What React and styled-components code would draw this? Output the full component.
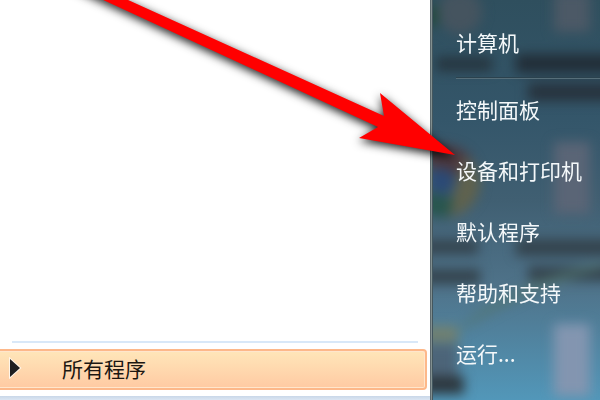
import React from 'react';
import styled, {createGlobalStyle} from 'styled-components';

const GlobalStyle = createGlobalStyle`
  body{
    margin: 0;
    overflow: hidden;
    background: #fff;
    font-family: "Noto Sans CJK SC", sans-serif;
  }
`;

const StartMenu = styled.div`
  position: relative;
  display: flex;
  min-height: 100vh;
  overflow: hidden;
`;

const Programs = styled.section`
  flex: 43;
  display: flex;
  flex-direction: column;
  justify-content: flex-end;
  background: #fff;
`;

const Divider = styled.hr`
  width: auto;
  height: 2px;
  margin: 0 12px 6px;
  border: 0;
  background: #d9e8f8;
`;

const AllPrograms = styled.button`
  display: flex;
  align-items: center;
  gap: 40px;
  height: 41px;
  margin: 0 3px 6px 0;
  padding: 0 0 4px 6px;
  border: 2px solid #fdb88a;
  border-left: 0;
  border-radius: 0 4px 4px 0;
  background: linear-gradient(#ffe6b9, #ffcaa3) padding-box;
  box-shadow: inset -1px 1px 0 #ffe6cc, inset 0 -1px 0 #ffe6cc;
  color: #1c1712;
  font-family: inherit;
  font-size: 21px;
  line-height: 32px;
`;

const SearchEdge = styled.div`
  height: 4px;
  background: linear-gradient(#c9d7e8, #dce6f3);
`;

const Places = styled.nav`
  position: relative;
  flex: 17;
  overflow: hidden;
  box-shadow: inset 1px 0 0 #5b686d, inset 2px 0 0 #829090, inset 3px 0 0 #43565e;
`;

const Backdrop = styled.svg`
  position: absolute;
  inset: 0;
  z-index: -1;
  width: 100%;
  height: 100%;
`;

const PlaceList = styled.ul`
  margin: 0;
  padding: 13px 0 0 26px;
  list-style: none;
`;

const Place = styled.li`
  ${({$divided}) => $divided && `
    &::after{
      content: "";
      display: block;
      height: 1px;
      margin: 3px 0 1px;
      border-top: 1px solid #2b424e;
      background: #566e79;
    }
  `}
`;

const PlaceLink = styled.a`
  display: flex;
  align-items: center;
  box-sizing: border-box;
  height: 61px;
  padding-bottom: 4px;
  color: #f4f8fa;
  font-size: 21px;
  line-height: 32px;
  text-decoration: none;
  white-space: nowrap;
`;

const Pointer = styled.svg`
  position: absolute;
  top: 0;
  left: 0;
  width: 100%;
  height: 100%;
  pointer-events: none;
`;

const places = [
    {name: "计算机", divided: true},
    {name: "控制面板"},
    {name: "设备和打印机"},
    {name: "默认程序"},
    {name: "帮助和支持"},
    {name: "运行..."},
];

function Desktop(){
    return <Backdrop viewBox="0 0 170 400" preserveAspectRatio="none" aria-hidden="true">
        <defs>
            <linearGradient id="glass" x2="0" y2="1">
                <stop offset="0" stopColor="#2f4f5e" />
                <stop offset=".3" stopColor="#34566a" />
                <stop offset=".5" stopColor="#405f72" />
                <stop offset=".72" stopColor="#4f738a" />
                <stop offset="1" stopColor="#5297b9" />
            </linearGradient>
            <filter id="soft" x="-50%" y="-50%" width="200%" height="200%" colorInterpolationFilters="sRGB">
                <feGaussianBlur stdDeviation="6" />
            </filter>
        </defs>
        <rect width="170" height="400" fill="url(#glass)" />
        <g filter="url(#soft)">
            <circle cx="30" cy="12" r="22" fill="#45545f" />
            <rect x="-6" y="6" width="14" height="20" fill="#21493d" />
            <rect x="124" y="-8" width="36" height="40" fill="#4c5966" />
            <rect x="6" y="57" width="56" height="14" fill="#26353f" />
            <rect x="86" y="54" width="100" height="19" fill="#222e38" />
            <rect x="98" y="83" width="90" height="18" fill="#27333e" />
            <g opacity=".85">
                <path d="M-8 146Q34 140 44 164L20 180L-8 160Z" fill="#503337" />
                <path d="M34 158Q56 170 48 194Q38 216 18 216L24 190Z" fill="#656348" />
                <path d="M-8 192L24 198L18 218L-8 214Z" fill="#245447" />
                <circle cx="12" cy="181" r="13" fill="#284777" />
            </g>
            <rect x="124" y="142" width="36" height="72" fill="#5a6576" />
            <rect x="-8" y="240" width="56" height="14" fill="#34434d" />
            <rect x="86" y="239" width="100" height="17" fill="#34434d" />
            <rect x="-8" y="269" width="58" height="15" fill="#34434d" />
            <rect x="98" y="266" width="90" height="15" fill="#34434d" />
            <path d="M24 334Q60 294 140 270L174 262V268Q100 290 52 318Z" fill="#53756d" opacity=".7" />
            <rect x="-8" y="326" width="36" height="16" fill="#71806f" />
            <rect x="-8" y="344" width="36" height="36" fill="#4c6478" />
            <rect x="124" y="324" width="36" height="72" fill="#8395b0" />
            <rect x="-8" y="376" width="42" height="18" fill="#2d373e" />
        </g>
    </Backdrop>
}

function App(){
    return <StartMenu>
        <GlobalStyle />
        <Programs>
            <Divider />
            <AllPrograms type="button">
                <svg width="16" height="22" viewBox="0 0 16 22" aria-hidden="true">
                    <path d="M4 2L14 11L4 20Z" fill="#1e1e20" stroke="#fff6ea" strokeWidth="2" paintOrder="stroke" />
                </svg>
                所有程序
            </AllPrograms>
            <SearchEdge />
        </Programs>
        <Places>
            <Desktop />
            <PlaceList>
                {places.map(({name, divided}) => <Place key={name} $divided={divided}>
                    <PlaceLink href="#">{name}</PlaceLink>
                </Place>)}
            </PlaceList>
        </Places>
        <Pointer viewBox="0 0 600 400" aria-hidden="true">
            <defs>
                <filter id="shadow" x="-10%" y="-20%" width="120%" height="150%" colorInterpolationFilters="sRGB">
                    <feDropShadow dx="0" dy="3" stdDeviation="5" floodColor="#000" floodOpacity=".9" />
                </filter>
            </defs>
            <path d="M84 -20L384 116L380 93L455 155L359 138L378 127L60 -20Z" fill="#f00" filter="url(#shadow)" />
        </Pointer>
    </StartMenu>
}

export default App;
